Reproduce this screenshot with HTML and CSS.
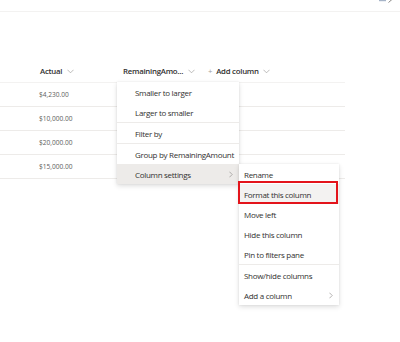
FILE: index.html
```html
<!DOCTYPE html>
<html lang="en">
<head>
    <meta charset="UTF-8">
    <meta name="viewport" content="width=device-width, initial-scale=1.0">
    <title>List view</title>
    <link rel="stylesheet" href="styles.css">
</head>
<body>
    <div class="topbar">
        <div class="top-icons">
            <svg width="7" height="4" viewBox="0 0 7 4"><path d="M0 1.5H7" stroke="#a6b4c8" stroke-width="1.4"/></svg>
            <svg width="5" height="4" viewBox="0 0 5 4"><path d="M0.5 3.5L4.5 0" stroke="#8a8886" stroke-width="1"/></svg>
        </div>
    </div>

    <div class="list">
        <div class="list-head">
            <div class="col col-actual">Actual <svg class="chev" viewBox="0 0 8 5"><path d="M0.5 0.5L4 4L7.5 0.5" fill="none"/></svg></div>
            <div class="col col-remaining">RemainingAmo... <svg class="chev" viewBox="0 0 8 5"><path d="M0.5 0.5L4 4L7.5 0.5" fill="none"/></svg></div>
            <div class="col col-add"><span class="plus">+</span> Add column <svg class="chev" viewBox="0 0 8 5"><path d="M0.5 0.5L4 4L7.5 0.5" fill="none"/></svg></div>
        </div>
        <div class="row"><span class="cell">$4,230.00</span></div>
        <div class="row"><span class="cell">$10,000.00</span></div>
        <div class="row"><span class="cell">$20,000.00</span></div>
        <div class="row"><span class="cell">$15,000.00</span></div>

        <!-- column header menu -->
        <div class="menu menu-main">
            <div class="item">Smaller to larger</div>
            <div class="item">Larger to smaller</div>
            <div class="divider"></div>
            <div class="item">Filter by</div>
            <div class="divider"></div>
            <div class="item">Group by RemainingAmount</div>
            <div class="item item-open">Column settings <svg class="arrow" viewBox="0 0 5 8"><path d="M0.5 0.5L4 4L0.5 7.5" fill="none"/></svg></div>
        </div>

        <div class="menu menu-sub">
            <div class="item">Rename</div>
            <div class="item item-marked">Format this column</div>
            <div class="item">Move left</div>
            <div class="item">Hide this column</div>
            <div class="item">Pin to filters pane</div>
            <div class="divider"></div>
            <div class="item">Show/hide columns</div>
            <div class="item">Add a column <svg class="arrow" viewBox="0 0 5 8"><path d="M0.5 0.5L4 4L0.5 7.5" fill="none"/></svg></div>
        </div>
    </div>
</body>
</html>
```

FILE: styles.css
```css
html, body {
    min-height: 100vh;
}
body {
    margin: 0;
    padding: 0;
    background: white;
    font-family: "Open Sans", "Noto Sans", sans-serif;
    color: #323130;
}
.topbar {
    height: 11px;
    border-bottom: 1px solid #f3f2f1;
    position: relative;
}
.top-icons {
    position: absolute;
    right: 7px;
    top: -1px;
    display: flex;
    gap: 2px;
}
.list {
    position: relative;
    width: 345px;
    margin-top: 48px;
}
.list-head {
    display: flex;
    align-items: center;
    height: 22px;
    border-bottom: 1px solid #f3f2f1;
    font-size: 7.8px;
    font-weight: 600;
    letter-spacing: -0.25px;
}
.col {
    display: flex;
    align-items: center;
    gap: 5px;
}
.col-actual {
    margin-left: 40px;
    width: 83px;
}
.col-remaining {
    width: 85px;
}
.col-add {
    gap: 4px;
}
.plus {
    color: #a19f9d;
    font-weight: 400;
}
.chev {
    width: 7px;
    height: 5px;
    stroke: #a19f9d;
    stroke-width: 0.8;
}
.row {
    height: 23px;
    border-bottom: 1px solid #edebe9;
    display: flex;
    align-items: center;
    font-size: 6.6px;
    color: #605e5c;
}
.cell {
    margin-left: 39px;
}
.menu {
    position: absolute;
    background: white;
    box-shadow: 0 2px 5px rgba(0, 0, 0, 0.13), 0 0 2px rgba(0, 0, 0, 0.08);
    font-size: 8px;
    letter-spacing: -0.3px;
}
.menu-main {
    left: 117px;
    top: 22px;
    width: 122px;
}
.menu-sub {
    left: 239px;
    top: 104px;
    width: 100px;
}
.item {
    height: 20px;
    display: flex;
    align-items: center;
    padding-left: 18px;
    position: relative;
    white-space: nowrap;
}
.menu-sub .item {
    padding-left: 5px;
}
.item-open {
    background: #edebe9;
}
.item-marked {
    background: #f3f2f1;
}
.item-marked::after {
    content: "";
    position: absolute;
    left: -1px;
    right: 1px;
    top: -3px;
    bottom: 0;
    border: 2px solid #e3141b;
}
.divider {
    height: 1px;
    background: #edebe9;
}
.arrow {
    position: absolute;
    right: 6px;
    width: 4px;
    height: 7px;
    stroke: #8a8886;
    stroke-width: 0.8;
}
```
